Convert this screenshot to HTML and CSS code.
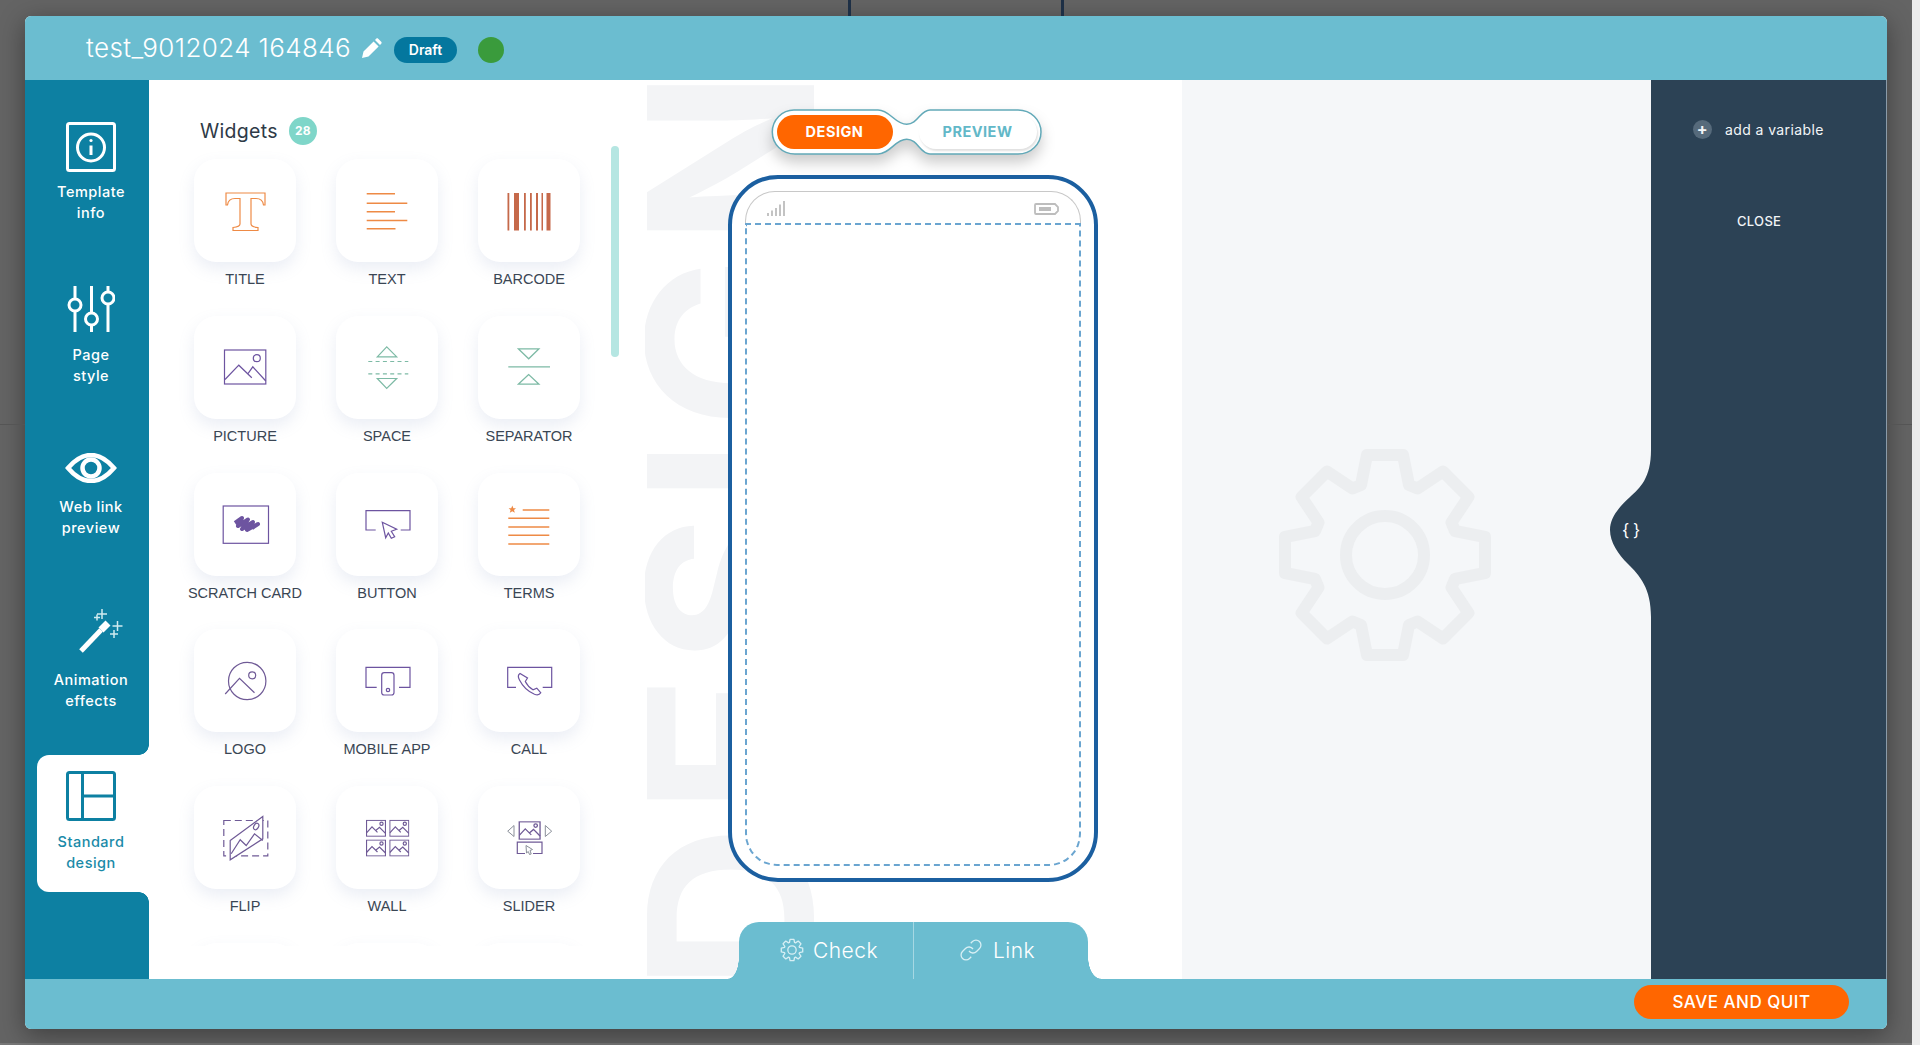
FILE: index.html
```html
<!DOCTYPE html>
<html lang="en">
  <head>
    <meta charset="UTF-8" />
    <meta name="viewport" content="width=device-width, initial-scale=1.0" />
    <title>Template editor</title>
    <link rel="stylesheet" href="styles.css">
  </head>
  <body>
    <span class="backdrop-line line-a"></span>
    <span class="backdrop-line line-b"></span>
    <span class="backdrop-rule rule-left"></span>
    <span class="backdrop-rule rule-right"></span>

    <svg class="sprites" width="0" height="0">
      <symbol id="gear" viewBox="-112 -112 224 224">
        <path d="M-18-100H18L24-70L32.5-66.5L58-83.4L83.4-58L66.5-32.5L70-24L100-18V18L70 24L66.5 32.5L83.4 58L58 83.4L32.5 66.5L24 70L18 100H-18L-24 70L-32.5 66.5L-58 83.4L-83.4 58L-66.5 32.5L-70 24L-100 18V-18L-70-24L-66.5-32.5L-83.4-58L-58-83.4L-32.5-66.5L-24-70Z" />
        <circle r="39" />
      </symbol>
      <symbol id="mini-pic" viewBox="0 0 20 17">
        <rect x="0.5" y="0.5" width="19" height="16" />
        <circle cx="15.5" cy="4" r="1.6" />
        <path d="M0.5 13L6 7L11.5 12.5M10 10.5L13.5 7.5L19.5 13.5" />
      </symbol>
    </svg>

    <div class="modal">
      <header class="modal-header">
        <span class="template-name">test_9012024 164846</span>
        <svg class="pencil" width="21" height="21" viewBox="0 0 21 21">
          <path d="M1 20L2.5 13.5L12.6 3.4L17.6 8.4L7.5 18.5ZM14 2L15.2 0.8C15.8 0.2 16.6 0.2 17.2 0.8L20.2 3.8C20.8 4.4 20.8 5.2 20.2 5.8L19 7Z" />
        </svg>
        <span class="status-pill">Draft</span>
        <span class="status-dot"></span>
      </header>

      <div class="modal-body">
        <nav class="sidebar">
          <a class="side-item item-info">
            <svg width="50" height="50" viewBox="0 0 50 50">
              <rect x="1.5" y="1.5" width="47" height="47" rx="2" />
              <circle cx="25" cy="25.5" r="13.5" />
              <path d="M25 23.5V33" />
              <circle class="dot" cx="25" cy="18.5" r="1.6" />
            </svg>
            <span>Template<br />info</span>
          </a>
          <a class="side-item item-style">
            <svg width="48" height="46" viewBox="0 0 48 46">
              <path d="M8 0V13M8 25V46M24.5 0V27M24.5 39V46M41 0V6M41 18V46" />
              <circle cx="8" cy="19" r="6" />
              <circle cx="24.5" cy="33" r="6" />
              <circle cx="41" cy="12" r="6" />
            </svg>
            <span>Page<br />style</span>
          </a>
          <a class="side-item item-preview">
            <svg width="52" height="30" viewBox="0 0 52 30">
              <path class="thick" d="M3 15C11 5.500 18 2 26 2C34 2 41 5.500 49 15C41 24.500 34 28 26 28C18 28 11 24.500 3 15Z" />
              <circle class="thick" cx="26" cy="15" r="8.500" />
            </svg>
            <span>Web link<br />preview</span>
          </a>
          <a class="side-item item-anim">
            <svg width="66" height="48" viewBox="0 0 66 48">
              <path class="stick" d="M23 45L43 24" />
              <path class="stick-tip" d="M43 24L50 17" />
              <path class="spark" d="M44 3V13M39 8H49M39 8.500V14.500M36 11.500H42M59.500 15V25M54.500 20H64.500M56 24V32M52 28H60" />
            </svg>
            <span>Animation<br />effects</span>
          </a>
          <a class="side-item item-design active">
            <svg width="50" height="50" viewBox="0 0 50 50">
              <rect x="1.500" y="1.500" width="47" height="47" rx="2" />
              <path d="M16.500 1.500V48.500M16.500 25H48.500" />
            </svg>
            <span>Standard<br />design</span>
          </a>
        </nav>

        <section class="widgets-panel">
          <h2 class="widgets-title">Widgets <span class="count-badge">28</span></h2>
          <span class="widgets-scrollbar"></span>
          <div class="widgets-scroll">
            <div class="widgets-grid">
              <div class="widget">
                <div class="widget-card">
                  <svg class="ic-orange" width="60" height="60" viewBox="0 0 60 60"><path d="M11 12H50V24H48.500C48 20 45 17.500 41 17.500H36V43C36 45 38 46 43 46.500V49.500H18V46.500C23 46 25 45 25 43V17.500H20C16 17.500 13 20 12.500 24H11Z" /></svg>
                </div>
                <span class="widget-label">TITLE</span>
              </div>
              <div class="widget">
                <div class="widget-card">
                  <svg class="ic-orange thicker" width="60" height="60" viewBox="0 0 60 60"><path d="M9.700 12.800H38M9.700 22.200H50.300M9.700 30.800H38M9.700 39.500H50.300M9.700 47.800H38.500" /></svg>
                </div>
                <span class="widget-label">TEXT</span>
              </div>
              <div class="widget">
                <div class="widget-card">
                  <svg class="ic-bars" width="60" height="60" viewBox="0 0 60 60">
                    <rect x="8.500" y="12" width="1.800" height="37.500" /><rect x="15" y="12" width="5" height="37.500" /><rect x="25" y="12" width="1.800" height="37.500" /><rect x="31" y="12" width="1.800" height="37.500" /><rect x="37" y="12" width="2" height="37.500" /><rect x="42.500" y="12" width="1.500" height="37.500" /><rect x="47.500" y="12" width="4" height="37.500" />
                  </svg>
                </div>
                <span class="widget-label">BARCODE</span>
              </div>

              <div class="widget">
                <div class="widget-card">
                  <svg class="ic-purple" width="60" height="60" viewBox="0 0 60 60"><rect x="9.500" y="13" width="41.300" height="34" /><circle cx="41.800" cy="21.200" r="3.500" /><path d="M10 42.500L23.800 28.200L36.800 40.800M32.800 36.800L37.800 29.800L50.800 44" /></svg>
                </div>
                <span class="widget-label">PICTURE</span>
              </div>
              <div class="widget">
                <div class="widget-card">
                  <svg class="ic-green" width="60" height="60" viewBox="0 0 60 60"><path d="M29.700 9.800L20.300 19.800H39.700ZM20.300 41.500H39.700L29.700 51.500Z" /><path stroke-dasharray="4 3.300" d="M11.300 24.500H51.300M11.300 36.800H51.300" /></svg>
                </div>
                <span class="widget-label">SPACE</span>
              </div>
              <div class="widget">
                <div class="widget-card">
                  <svg class="ic-green" width="60" height="60" viewBox="0 0 60 60"><path d="M19.300 11.800H40L29.700 21.800ZM9.300 29.800H51M29.700 37.500L19.300 47.200H40Z" /></svg>
                </div>
                <span class="widget-label">SEPARATOR</span>
              </div>

              <div class="widget">
                <div class="widget-card">
                  <svg class="ic-purple" width="60" height="60" viewBox="0 0 60 60"><rect x="8.200" y="12" width="45.300" height="37.300" /><path class="scribble" d="M20 29L27 24L23 32L33 25.500L27 35L38 28L32 36L43 30L37 34" /></svg>
                </div>
                <span class="widget-label">SCRATCH CARD</span>
              </div>
              <div class="widget">
                <div class="widget-card">
                  <svg class="ic-purple" width="60" height="60" viewBox="0 0 60 60"><path d="M18.700 36H9V16.700H53V36H43.700" /><path d="M25.300 28.300L39.700 35.300L34.300 37.300L37.700 42.700L34.300 44.300L31.300 39L28.700 43.700Z" /></svg>
                </div>
                <span class="widget-label">BUTTON</span>
              </div>
              <div class="widget">
                <div class="widget-card">
                  <svg class="ic-orange thicker" width="60" height="60" viewBox="0 0 60 60"><path d="M23.700 16H50.300M9.300 24.300H50.300M9.300 33H50.300M9.300 41.300H50.300M9.300 50H50.300" /><path class="star" d="M13.300 11.500L14.400 14.300H17L15 16L15.800 18.800L13.300 17.200L10.800 18.800L11.600 16L9.600 14.300H12.200Z" /></svg>
                </div>
                <span class="widget-label">TERMS</span>
              </div>

              <div class="widget">
                <div class="widget-card">
                  <svg class="ic-muted" width="60" height="60" viewBox="0 0 60 60"><circle cx="32.200" cy="30" r="18.700" /><circle cx="37.200" cy="24.300" r="3.500" /><path d="M10.200 43L24.500 27.300L39.500 41.700" /></svg>
                </div>
                <span class="widget-label">LOGO</span>
              </div>
              <div class="widget">
                <div class="widget-card">
                  <svg class="ic-purple" width="60" height="60" viewBox="0 0 60 60"><path d="M19.700 36.300H9V16.300H53V36.300H42" /><rect x="24.700" y="21.700" width="12.300" height="22.300" rx="2.500" /><circle cx="31" cy="39" r="1.700" /></svg>
                </div>
                <span class="widget-label">MOBILE APP</span>
              </div>
              <div class="widget">
                <div class="widget-card">
                  <svg class="ic-purple" width="60" height="60" viewBox="0 0 60 60"><path d="M17 36.300H8.700V16.300H52.700V36.300H43.700" /><path d="M21 22.500C19 23.800 18.800 26 20.500 29C23.500 35 29 40.500 35.500 43.300C38.500 44.500 40.500 44 41.800 41.800L37.800 37.200L34 38.800C31 37 28 34 26.300 30.500L28.500 27Z" /></svg>
                </div>
                <span class="widget-label">CALL</span>
              </div>

              <div class="widget">
                <div class="widget-card">
                  <svg class="ic-muted" width="60" height="60" viewBox="0 0 60 60"><rect stroke-dasharray="7 4" x="8.800" y="12.500" width="44" height="35.300" /><path class="on-white" d="M15.200 32.500L47.800 8.500V30.800L15.200 51.800Z" /><path d="M16.200 45.800L25.200 31.800L31.200 37.500L39.500 25.800L47.800 32.500" /><ellipse cx="41.200" cy="18.500" rx="2.300" ry="3.400" transform="rotate(30 41.200 18.500)" /></svg>
                </div>
                <span class="widget-label">FLIP</span>
              </div>
              <div class="widget">
                <div class="widget-card">
                  <svg class="ic-muted" width="60" height="60" viewBox="0 0 60 60">
                    <use href="#mini-pic" x="9" y="11.800" width="20" height="17" />
                    <use href="#mini-pic" x="32.300" y="11.800" width="20" height="17" />
                    <use href="#mini-pic" x="9" y="31.500" width="20" height="17" />
                    <use href="#mini-pic" x="32.300" y="31.500" width="20" height="17" />
                  </svg>
                </div>
                <span class="widget-label">WALL</span>
              </div>
              <div class="widget">
                <div class="widget-card">
                  <svg class="ic-muted" width="60" height="60" viewBox="0 0 60 60">
                    <use href="#mini-pic" x="18.300" y="13.200" width="24.700" height="18.600" />
                    <path class="ic-gray" d="M15 17.500V28.500L8.700 23.200ZM46.300 17.500V28.500L52.700 23.200Z" />
                    <path d="M26 45.500H18.300V34.200H43V45.500H34" />
                    <path class="ic-gray" d="M27 37.500L33.500 41.500L31 42.500L32.200 46L30.500 46.500L29.300 43.500L27.500 45Z" />
                  </svg>
                </div>
                <span class="widget-label">SLIDER</span>
              </div>

              <div class="widget"><div class="widget-card"></div></div>
              <div class="widget"><div class="widget-card"></div></div>
              <div class="widget"><div class="widget-card"></div></div>
            </div>
          </div>
        </section>

        <section class="design-area">
          <span class="watermark">DESIGN</span>

          <div class="mode-toggle">
            <svg class="toggle-shape" width="274" height="48" viewBox="0 0 274 48">
              <path d="M24 2H108C120 2 125 16.300 136.700 16.300C148 16.300 150 2 160 2H248C261 2 271 12 271 24C271 36 261 46 248 46H160C150 46 148 31.300 136.700 31.300C125 31.300 120 46 108 46H25C12 46 2.300 36 2.300 24C2.300 12 12 2 24 2Z" />
            </svg>
            <span class="mode-btn mode-on">DESIGN</span>
            <span class="mode-btn mode-off">PREVIEW</span>
          </div>

          <div class="phone">
            <div class="phone-status">
              <svg width="18" height="15" viewBox="0 0 18 15">
                <path d="M1 15V12M5 15V9.500M9 15V7M13 15V3.500M17 15V0" />
              </svg>
              <svg width="25" height="12" viewBox="0 0 25 12">
                <path d="M2 1H21L24 4V8L21 11H2C1.400 11 1 10.600 1 10V2C1 1.400 1.400 1 2 1Z" />
                <rect class="cell" x="5" y="4" width="12" height="4" />
              </svg>
            </div>
            <div class="phone-screen"></div>
          </div>

          <div class="check-tab">
            <a class="check-link link-check">
              <svg class="tab-gear" width="24" height="24"><use href="#gear" /></svg>
              Check
            </a>
            <a class="check-link link-chain">
              <svg class="tab-chain" width="24" height="24" viewBox="0 0 24 24">
                <path d="M10 13a5 5 0 0 0 7.540.540l3-3a5 5 0 0 0-7.070-7.070l-1.720 1.710" />
                <path d="M14 11a5 5 0 0 0-7.540-.540l-3 3a5 5 0 0 0 7.070 7.070l1.710-1.710" />
              </svg>
              Link
            </a>
          </div>
        </section>

        <section class="settings-area">
          <svg class="big-gear" width="224" height="224"><use href="#gear" /></svg>
        </section>

        <aside class="variables-panel">
          <div class="vars-handle">
            <svg width="42" height="167" viewBox="0 0 42 167">
              <path d="M41 0C41 28 30 38 20 47C8 58 0 68 0 80C0 92 8 104 18 114C30 126 41 138 41 167H42V0Z" />
            </svg>
            <span class="vars-braces">{ }</span>
          </div>
          <a class="add-variable"><span class="plus-circle">+</span>add a variable</a>
          <a class="close-vars">CLOSE</a>
        </aside>
      </div>

      <footer class="modal-footer">
        <button class="save-btn">SAVE AND QUIT</button>
      </footer>
    </div>
  </body>
</html>
```

FILE: styles.css
```css
* {
  box-sizing: border-box;
}

body {
  margin: 0;
  height: 1045px;
  padding: 16px 33px 16px 25px;
  overflow: hidden;
  position: relative;
  font-family: Inter, "Open Sans", sans-serif;
  background:
    linear-gradient(to left, #ececec 8px, transparent 8px),
    linear-gradient(to top, #777 2px, transparent 2px),
    #646464;
}

.backdrop-line {
  position: absolute;
  top: 0;
  width: 3px;
  height: 16px;
  background-color: #1d2f45;
}
.line-a {
  left: 848px;
}
.line-b {
  left: 1061px;
}

.backdrop-rule {
  position: absolute;
  top: 424px;
  height: 1px;
  background-color: #555;
}
.rule-left {
  left: 0;
  width: 25px;
}
.rule-right {
  left: 1888px;
  width: 24px;
}

.sprites {
  position: absolute;
}

#gear path,
#gear circle {
  fill: none;
  stroke-width: 12;
  stroke-linejoin: round;
}

#mini-pic rect,
#mini-pic circle,
#mini-pic path {
  fill: none;
}

.modal {
  width: 1862px;
  height: 1013px;
  display: flex;
  flex-direction: column;
  border-radius: 6px;
  overflow: hidden;
  box-shadow: 0 6px 26px rgba(0, 0, 0, 0.38);
  background-color: #fff;
}

/* header */
.modal-header {
  height: 64px;
  flex: none;
  display: flex;
  align-items: center;
  padding: 3px 0 0 61px;
  background-color: #6bbdd0;
}

.template-name {
  width: 265px;
  color: #fff;
  font-size: 26px;
  font-weight: 300;
  letter-spacing: 0.4px;
  white-space: nowrap;
  margin-top: -4px;
}

.pencil {
  margin: -2px 12px 0 10px;
  fill: #fff;
}

.status-pill {
  width: 63px;
  height: 26px;
  line-height: 26px;
  text-align: center;
  border-radius: 13px;
  color: #fff;
  font-size: 14px;
  font-weight: 600;
  background-color: #04779e;
}

.status-dot {
  width: 26px;
  height: 26px;
  margin-left: 21px;
  border-radius: 50%;
  background-color: #3a9b3c;
}

.modal-body {
  flex: 1;
  display: flex;
  min-height: 0;
}

/* sidebar */
.sidebar {
  width: 124px;
  flex: none;
  padding-top: 42px;
  display: flex;
  flex-direction: column;
  background-color: #0d80a2;
}

.side-item {
  display: flex;
  flex-direction: column;
  align-items: center;
  padding-left: 8px;
  color: #fff;
  font-size: 14.5px;
  font-weight: 500;
  line-height: 21px;
  letter-spacing: 0.5px;
  text-align: center;
}

.side-item svg {
  flex: none;
  fill: none;
  stroke: #fff;
  stroke-width: 3;
}

.side-item svg .dot {
  fill: #fff;
  stroke: none;
}

.side-item svg .thick {
  stroke-width: 4.5;
}

.side-item svg .stick {
  stroke-width: 5;
}

.side-item svg .stick-tip {
  stroke-width: 7;
}

.side-item svg .spark {
  stroke: #cfeaf0;
  stroke-width: 1.5;
}

.item-info {
  height: 164px;
}
.item-info svg {
  margin-bottom: 9px;
}

.item-style {
  height: 169px;
}
.item-style svg {
  margin-bottom: 12px;
}

.item-preview {
  height: 151px;
}
.item-preview svg {
  margin: -2px 0 13px;
}

.item-anim {
  height: 149px;
}
.item-anim svg {
  margin-bottom: 15px;
}

.item-design {
  height: 137px;
}

.side-item.active {
  position: relative;
  margin-left: 12px;
  padding: 16px 4px 0 0;
  border-radius: 12px 0 0 12px;
  color: #1a8aa8;
  background-color: #fff;
}
.side-item.active svg {
  stroke: #0d80a2;
  margin-bottom: 10px;
}
.side-item.active::before,
.side-item.active::after {
  content: "";
  position: absolute;
  right: 0;
  width: 10px;
  height: 10px;
}
.side-item.active::before {
  top: -10px;
  background: radial-gradient(circle at 0 0, #0d80a2 9.5px, #fff 10px);
}
.side-item.active::after {
  bottom: -10px;
  background: radial-gradient(circle at 0 100%, #0d80a2 9.5px, #fff 10px);
}

/* widgets */
.widgets-panel {
  width: 496px;
  flex: none;
  position: relative;
  padding-top: 38px;
  background-color: #fff;
}

.widgets-title {
  margin: 0 0 0 51px;
  height: 26px;
  display: flex;
  align-items: center;
  gap: 11px;
  font-size: 19.5px;
  font-weight: 400;
  color: #2e3a47;
  letter-spacing: 0.3px;
}

.count-badge {
  width: 28px;
  height: 28px;
  line-height: 28px;
  text-align: center;
  border-radius: 50%;
  color: #fff;
  font-size: 12px;
  font-weight: 700;
  letter-spacing: 0;
  background-color: #7fd6c9;
}

.widgets-scrollbar {
  position: absolute;
  left: 462px;
  top: 66px;
  width: 8px;
  height: 211px;
  border-radius: 4px;
  background-color: #b5e6e2;
}

.widgets-scroll {
  height: 802px;
  padding: 15px 0 0 45px;
  overflow: hidden;
}

.widgets-grid {
  display: grid;
  grid-template-columns: repeat(3, 102px);
  grid-auto-rows: 156.75px;
  column-gap: 40px;
}

.widget {
  display: flex;
  flex-direction: column;
  align-items: center;
}

.widget-card {
  width: 102px;
  height: 103px;
  flex: none;
  display: flex;
  align-items: center;
  justify-content: center;
  border-radius: 22px;
  background-color: #fff;
  box-shadow: 0 7px 16px rgba(130, 150, 190, 0.16);
}

.widget-card svg {
  fill: none;
  stroke-width: 1.2;
}

.widget-label {
  margin-top: 7px;
  line-height: 20px;
  font-family: "Liberation Sans", Arial, sans-serif;
  font-size: 14.5px;
  color: #3a4654;
  white-space: nowrap;
}

.ic-orange {
  stroke: #ee8a45;
}
.ic-orange.thicker {
  stroke-width: 1.6;
}
.ic-orange .star {
  fill: #ee8a45;
  stroke: none;
}
.widget-card .ic-bars {
  fill: #c5694a;
}
.ic-purple {
  stroke: #6d54a0;
}
.ic-purple .scribble {
  stroke-width: 4;
  stroke-linejoin: round;
}
.ic-green {
  stroke: #7dbaa5;
}
.ic-muted {
  stroke: #6f5a96;
}
.ic-muted .on-white {
  fill: #fff;
}
.ic-gray {
  stroke: #8a8f99;
  stroke-width: 1;
}

/* design area */
.design-area {
  width: 537px;
  flex: none;
  position: relative;
  overflow: hidden;
  display: flex;
  flex-direction: column;
  align-items: center;
  padding-top: 30px;
  background-color: #fff;
}

.watermark {
  position: absolute;
  left: 200px;
  bottom: -12px;
  transform-origin: 0 100%;
  transform: rotate(-90deg);
  font-family: Inter, sans-serif;
  font-size: 230px;
  font-weight: 700;
  line-height: 1;
  letter-spacing: 10.4px;
  white-space: nowrap;
  color: #f3f4f6;
}

.mode-toggle {
  position: relative;
  width: 269px;
  height: 44px;
  flex: none;
  margin-right: 15px;
  display: flex;
  padding: 5px 0 0 5px;
}

.toggle-shape {
  position: absolute;
  left: -2px;
  top: -2px;
  overflow: visible;
  filter: drop-shadow(0 8px 7px rgba(0, 0, 0, 0.2));
}
.toggle-shape path {
  fill: #fff;
  stroke: #62a9b8;
  stroke-width: 1.5;
}

.mode-btn {
  position: relative;
  height: 34px;
  line-height: 34px;
  text-align: center;
  font-size: 14.5px;
  font-weight: 700;
  letter-spacing: 0.5px;
  border-radius: 17px;
}

.mode-on {
  width: 116px;
  color: #fff;
  background-color: #ff6600;
}

.mode-off {
  width: 118px;
  margin-left: 26px;
  color: #62b8c8;
  background-color: #fff;
  box-shadow: 1px 2px 2px rgba(0, 0, 0, 0.12);
}

.phone {
  width: 370px;
  height: 707px;
  flex: none;
  margin: 21px 2px 0 0;
  padding: 12px 13px;
  display: flex;
  flex-direction: column;
  border: 4px solid #1b5fa0;
  border-radius: 50px;
  background-color: #fff;
  position: relative;
}

.phone-status {
  height: 32px;
  flex: none;
  display: flex;
  align-items: center;
  justify-content: space-between;
  padding: 2px 21px 0;
  border: 1.5px solid #c8c8c8;
  border-bottom: 0;
  border-radius: 30px 30px 0 0;
}
.phone-status svg {
  fill: none;
  stroke: #bdbdbd;
  stroke-width: 1.8;
}
.phone-status .cell {
  fill: #bdbdbd;
  stroke: none;
}

.phone-screen {
  flex: 1;
  border: 2px dashed #6aa5d0;
  border-radius: 0 0 32px 32px;
}

.check-tab {
  position: relative;
  width: 349px;
  height: 57px;
  flex: none;
  margin-top: auto;
  display: flex;
  border-radius: 20px 20px 0 0;
  background-color: #6bbdd0;
}
.check-tab::before,
.check-tab::after {
  content: "";
  position: absolute;
  bottom: 0;
  width: 11px;
  height: 22px;
}
.check-tab::before {
  left: -11px;
  background: radial-gradient(ellipse 11px 22px at 0 0, transparent 97%, #6bbdd0 100%);
}
.check-tab::after {
  right: -13px;
  width: 13px;
  background: radial-gradient(ellipse 13px 22px at 100% 0, transparent 97%, #6bbdd0 100%);
}

.check-link {
  flex: 1;
  display: flex;
  align-items: center;
  justify-content: center;
  gap: 9px;
  color: #fff;
  font-size: 21px;
  font-weight: 300;
  letter-spacing: 0.5px;
  padding-bottom: 1px;
}
.link-check {
  flex: 0 0 174px;
  padding-left: 6px;
}
.link-chain {
  gap: 10px;
  padding-right: 8px;
}
.check-link + .check-link {
  border-left: 1.5px solid #a6d8e3;
}

.tab-gear {
  fill: none;
  stroke: #d8eff4;
}
.tab-chain {
  fill: none;
  stroke: #d8eff4;
  stroke-width: 1.3;
}

/* settings placeholder */
.settings-area {
  flex: 1;
  display: flex;
  align-items: flex-start;
  justify-content: center;
  padding: 363px 63px 0 0;
  background-color: #f5f7f9;
}

.big-gear {
  fill: none;
  stroke: #eceef0;
}

/* variables */
.variables-panel {
  width: 236px;
  flex: none;
  position: relative;
  padding-top: 40px;
  color: #f2f5f7;
  border-right: 1px solid #8a9aa8;
  background-color: #2c4255;
}

.vars-handle {
  position: absolute;
  left: -41px;
  top: 370px;
  width: 42px;
  height: 167px;
  fill: #2c4255;
}

.vars-braces {
  position: absolute;
  left: 12px;
  top: 66px;
  font-family: Inter, sans-serif;
  font-size: 17px;
  line-height: 28px;
  letter-spacing: -0.5px;
  color: #fff;
  white-space: nowrap;
}

.add-variable {
  position: relative;
  display: flex;
  align-items: center;
  gap: 13px;
  padding-left: 42px;
  font-size: 14px;
  letter-spacing: 0.4px;
}

.plus-circle {
  width: 19px;
  height: 19px;
  line-height: 18px;
  text-align: center;
  border-radius: 50%;
  font-size: 16px;
  font-weight: 700;
  background-color: #566a7b;
}

.close-vars {
  display: block;
  margin: 74px 0 0 86px;
  font-size: 13px;
  font-weight: 500;
  letter-spacing: 0.3px;
}

/* footer */
.modal-footer {
  height: 50px;
  flex: none;
  display: flex;
  align-items: center;
  justify-content: flex-end;
  padding: 0 38px 5px 0;
  background-color: #6bbdd0;
}

.save-btn {
  width: 215px;
  height: 34px;
  padding: 0;
  border: 0;
  border-radius: 17px;
  color: #fff;
  font-family: Inter, sans-serif;
  font-size: 17px;
  font-weight: 500;
  letter-spacing: 0.5px;
  background-color: #ff6600;
}
```
